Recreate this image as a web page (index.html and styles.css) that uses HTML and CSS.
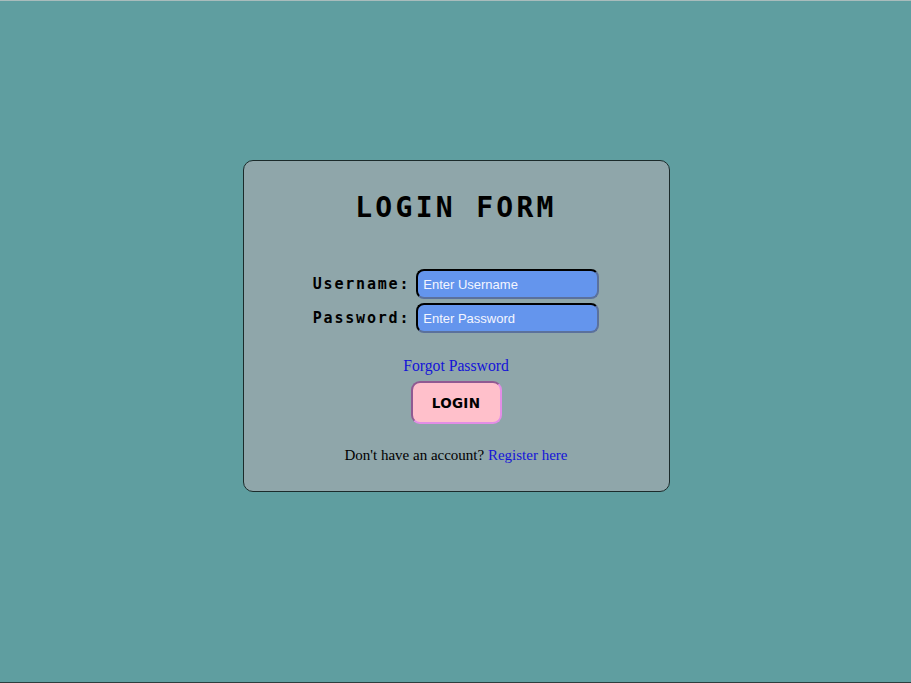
FILE: index.html
```html
<!DOCTYPE html>
<html>
<head>
<meta charset="utf-8">
<title>Login Form</title>
<link rel="stylesheet" href="styles.css">
</head>
<body>
<div class="page">
  <div class="card">
    <h1 class="title">LOGIN FORM</h1>
    <form class="fields">
      <label class="label" for="u">Username:</label>
      <input class="input" id="u" type="text" placeholder="Enter Username">
      <label class="label" for="p">Password:</label>
      <input class="input" id="p" type="password" placeholder="Enter Password">
    </form>
    <a class="forgot" href="#">Forgot Password</a>
    <button class="btn" type="button">LOGIN</button>
    <p class="register">Don't have an account? <a href="#">Register here</a></p>
  </div>
</div>
</body>
</html>
```
FILE: styles.css
```css
html, body {
  margin: 0;
  padding: 0;
}
body {
  background: #5f9ea0;
  height: 683px;
  box-sizing: border-box;
  border-top: 1px solid #a9bcbc;
  border-bottom: 1px solid #2c3e3e;
  font-family: "Liberation Serif", serif;
}
.page {
  display: flex;
  justify-content: center;
  padding-top: 159px;
  padding-left: 1px;
}
.card {
  width: 425px;
  background: #8fa6aa;
  border: 1px solid #1b2b2b;
  border-radius: 10px;
  display: flex;
  flex-direction: column;
  align-items: center;
  padding-bottom: 26px;
}
.title {
  margin: 30px 0 0;
  font-family: "DejaVu Sans Mono", monospace;
  font-weight: bold;
  font-size: 28px;
  line-height: 34px;
  letter-spacing: 3.3px;
  color: #000;
}
.fields {
  margin-top: 44px;
  display: grid;
  grid-template-columns: auto 183px;
  column-gap: 6px;
  row-gap: 4px;
  align-items: center;
}
.label {
  font-family: "DejaVu Sans Mono", monospace;
  font-weight: bold;
  font-size: 15px;
  letter-spacing: 1.8px;
  color: #000;
  text-align: right;
}
.input {
  box-sizing: border-box;
  width: 183px;
  height: 30px;
  background: #6495ed;
  border: 2px inset #2a3448;
  border-radius: 8px;
  padding: 0 5px;
  font-family: "Liberation Sans", sans-serif;
  font-size: 13px;
  color: #fff;
  outline: none;
}
.input::placeholder {
  color: #f4f6ff;
  opacity: 1;
}
.forgot {
  margin-top: 23px;
  font-size: 15.7px;
  line-height: 20px;
  color: #1414d8;
  text-decoration: none;
}
.btn {
  margin-top: 5px;
  box-sizing: border-box;
  width: 91px;
  height: 43px;
  background: #ffc0cb;
  border: 2px inset #e38de6;
  border-radius: 9px;
  font-family: "DejaVu Sans", sans-serif;
  font-weight: bold;
  font-size: 13.5px;
  letter-spacing: 0.3px;
  color: #000;
  padding: 0;
}
.register {
  margin: 21px 0 0;
  font-size: 15px;
  line-height: 20px;
  color: #000;
}
.register a {
  color: #1414d8;
  text-decoration: none;
}
```
